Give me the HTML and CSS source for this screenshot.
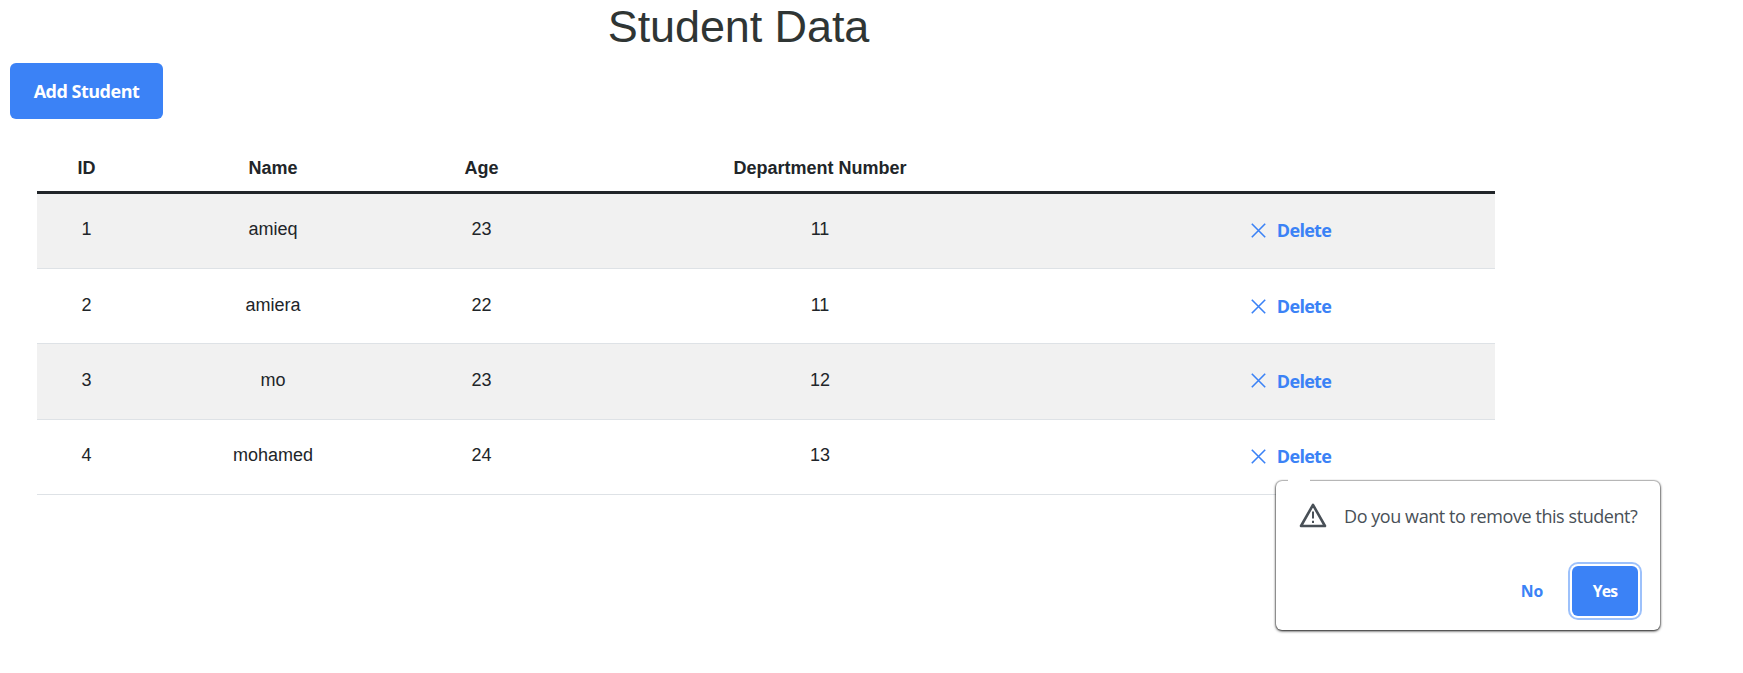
FILE: index.html
```html
<!DOCTYPE html>
<html lang="en">
<head>
<meta charset="utf-8">
<title>Student Data</title>
<link rel="stylesheet" href="styles.css">
</head>
<body>
<main class="page">
  <h1 class="title">Student Data</h1>
  <button class="btn add"><span>Add Student</span></button>
  <table class="students">
    <colgroup><col class="c-id"><col class="c-name"><col class="c-age"><col class="c-dept"><col class="c-action"></colgroup>
    <thead>
      <tr><th>ID</th><th>Name</th><th>Age</th><th>Department Number</th><th></th></tr>
    </thead>
    <tbody>
      <tr><td>1</td><td>amieq</td><td>23</td><td>11</td><td><button class="delete"><svg class="times" viewBox="0 0 15 15"><path d="M.8 .8 14.2 14.2M14.2 .8 .8 14.2"/></svg><span>Delete</span></button></td></tr>
      <tr><td>2</td><td>amiera</td><td>22</td><td>11</td><td><button class="delete"><svg class="times" viewBox="0 0 15 15"><path d="M.8 .8 14.2 14.2M14.2 .8 .8 14.2"/></svg><span>Delete</span></button></td></tr>
      <tr><td>3</td><td>mo</td><td>23</td><td>12</td><td><button class="delete"><svg class="times" viewBox="0 0 15 15"><path d="M.8 .8 14.2 14.2M14.2 .8 .8 14.2"/></svg><span>Delete</span></button></td></tr>
      <tr><td>4</td><td>mohamed</td><td>24</td><td>13</td><td><button class="delete"><svg class="times" viewBox="0 0 15 15"><path d="M.8 .8 14.2 14.2M14.2 .8 .8 14.2"/></svg><span>Delete</span></button></td></tr>
    </tbody>
  </table>
</main>
<div class="popup" role="dialog">
  <div class="popup-content">
    <svg class="warning" viewBox="0 0 28 25"><path class="tri" d="M14 1.9 26 23H2Z"/><path class="mark" d="M14 8.6v6.9M14 17.8v2.2"/></svg>
    <span class="message">Do you want to remove this student?</span>
  </div>
  <div class="popup-footer">
    <button class="btn no">No</button>
    <button class="btn yes">Yes</button>
  </div>
</div>
</body>
</html>
```

FILE: styles.css
```css
* { box-sizing: border-box; }
body {
  margin: 0;
  background: #fff;
  color: #212529;
  font: 18px/27px "Liberation Sans", Arial, sans-serif;
}
.page { width: 1495px; padding-left: 10px; }
.title {
  margin: 0;
  padding: 0 28px 0 0;
  height: 63px;
  font-size: 45px;
  font-weight: 400;
  line-height: 54px;
  letter-spacing: -0.1px;
  text-align: center;
  color: #2f3534;
}
.btn, .delete {
  border: 0;
  padding: 0;
  font-family: "Open Sans", "Noto Sans", sans-serif;
  font-weight: 700;
  white-space: nowrap;
}
.btn { border-radius: 6px; background: #3b82f6; color: #fff; }
.add {
  display: block;
  width: 153px;
  height: 56px;
  font-size: 18px;
  letter-spacing: -0.5px;
}
.students {
  width: 1458px;
  margin: 27px 0 0 27px;
  border-collapse: separate;
  border-spacing: 0;
  table-layout: fixed;
  text-align: center;
}
.c-id { width: 99px; }
.c-name { width: 274px; }
.c-age { width: 143px; }
.c-dept { width: 534px; }
.c-action { width: 408px; }
th { height: 48px; padding: 0; border-bottom: 3px solid #212529; }
td { height: 75px; padding: 0 0 3px; border-bottom: 1px solid #dee2e6; }
tbody tr:nth-child(2) td { padding-bottom: 1px; }
tbody tr:nth-child(3) td { height: 76px; }
tbody tr:nth-child(odd) td { background: #f1f1f1; }
.delete {
  display: inline-flex;
  align-items: center;
  gap: 11px;
  background: none;
  color: #3b82f6;
  font-size: 18px;
  letter-spacing: -0.7px;
  vertical-align: middle;
}
.times { width: 15px; height: 15px; fill: none; stroke: currentColor; stroke-width: 1.6; }
.popup {
  position: absolute;
  left: 1276px;
  top: 481px;
  width: 384px;
  height: 149px;
  border-radius: 6px;
  background: #fff;
  color: #495057;
  box-shadow: 0 0 1px 1px rgba(0, 0, 0, .2), 0 1px 3px rgba(0, 0, 0, .9);
}
.popup::before {
  content: "";
  position: absolute;
  left: 12px;
  top: -3px;
  width: 22px;
  height: 6px;
  background: #fff;
}
.popup-content { display: flex; align-items: center; gap: 17px; padding: 22px 0 0 23px; }
.warning { width: 28px; height: 25px; margin-top: -2px; fill: none; stroke: #495057; }
.tri { stroke-width: 2.6; stroke-linejoin: round; }
.mark { stroke-width: 2; }
.message {
  font-family: "Open Sans", "Noto Sans", sans-serif;
  font-size: 18px;
  letter-spacing: -0.43px;
  white-space: nowrap;
}
.popup-footer { display: flex; justify-content: flex-end; gap: 9px; padding: 36px 22px 0 0; }
.popup-footer .btn { height: 50px; font-size: 15.75px; }
.no { width: 62px; background: none; color: #3b82f6; }
.yes { width: 66px; letter-spacing: -0.9px; box-shadow: 0 0 0 2px #fff, 0 0 0 4px #9dc1fb; }
.popup-footer .no { background: none; color: #3b82f6; }
```
